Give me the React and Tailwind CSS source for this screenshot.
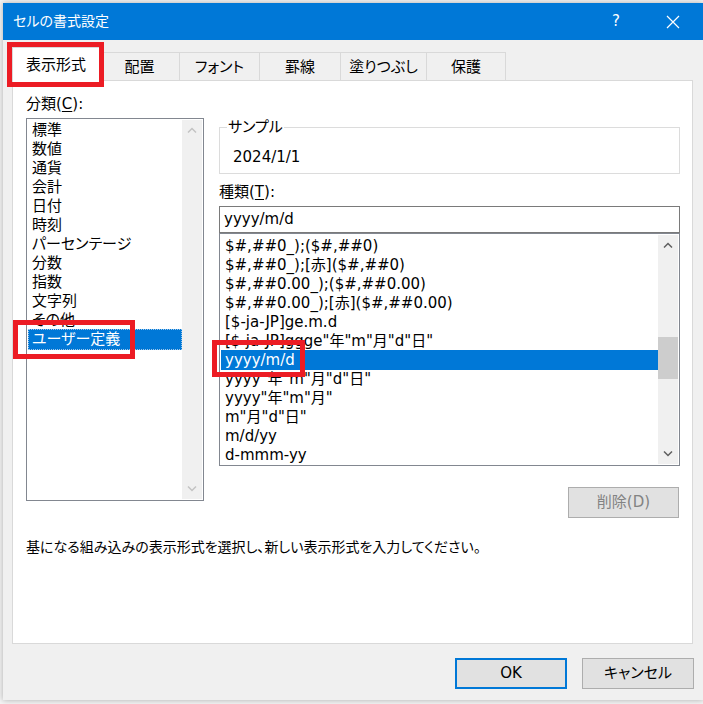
import { useState } from "react";

const CATEGORIES = [
  "標準",
  "数値",
  "通貨",
  "会計",
  "日付",
  "時刻",
  "パーセンテージ",
  "分数",
  "指数",
  "文字列",
  "その他",
  "ユーザー定義",
];

const FORMATS = [
  "$#,##0_);($#,##0)",
  "$#,##0_);[赤]($#,##0)",
  "$#,##0.00_);($#,##0.00)",
  "$#,##0.00_);[赤]($#,##0.00)",
  "[$-ja-JP]ge.m.d",
  '[$-ja-JP]ggge"年"m"月"d"日"',
  "yyyy/m/d",
  'yyyy"年"m"月"d"日"',
  'yyyy"年"m"月"',
  'm"月"d"日"',
  "m/d/yy",
  "d-mmm-yy",
];

const TABS = [
  { label: "表示形式", w: "w-[88px]" },
  { label: "配置", w: "w-[80px]" },
  { label: "フォント", w: "w-[80px]" },
  { label: "罫線", w: "w-[81px]" },
  { label: "塗りつぶし", w: "w-[86px]" },
  { label: "保護", w: "w-[79px]" },
];

function Chevron({ up, className }) {
  return (
    <svg width="10" height="6" viewBox="0 0 10 6" className={className}>
      <polyline
        points={up ? "1,5.5 5,1.5 9,5.5" : "1,0.5 5,4.5 9,0.5"}
        fill="none"
        stroke="currentColor"
        strokeWidth="1.5"
      />
    </svg>
  );
}

function Scrollbar({ disabled, thumb }) {
  const arrow = disabled ? "text-[#c3c3c3]" : "text-[#606060]";
  return (
    <div className="flex w-[20px] shrink-0 flex-col bg-[#f0f0f0]">
      <div className={`flex h-[20px] items-center justify-center ${arrow}`}>
        <Chevron up />
      </div>
      <div className="flex-1">
        {thumb && <div className="mt-[82px] h-[42px] bg-[#cdcdcd]" />}
      </div>
      <div className={`flex h-[20px] items-center justify-center ${arrow}`}>
        <Chevron />
      </div>
    </div>
  );
}

function RedBox({ className }) {
  return (
    <div
      className={`pointer-events-none absolute z-20 border-[5px] border-[#ec1c24] ${className}`}
    />
  );
}

export default function App() {
  const [category] = useState(11);
  const [format] = useState(6);

  return (
    <div className="h-[704px] w-[703px] overflow-hidden bg-[#f4f4f4] pl-[3px] pt-[3px] font-['DejaVu_Sans','Noto_Sans_CJK_JP',sans-serif] text-black [font-feature-settings:'palt']">
      <div className="relative flex h-[697px] w-[700px] flex-col bg-[#f0f0f0] shadow-[0_0_6px_rgba(0,0,0,0.3)]">
        {/* title bar */}
        <div className="flex h-[37px] shrink-0 items-center bg-[#0078d7] text-white">
          <span className="pl-[10px] text-[14px] leading-[19px]">セルの書式設定</span>
          <div className="ml-auto mr-[7px] flex items-center">
            <span className="w-[46px] text-center text-[15px] leading-[19px]">?</span>
            <div className="ml-[11px] flex w-[46px] items-center justify-center">
              <svg width="14" height="14" viewBox="0 0 14 14">
                <path d="M1 1L13 13M13 1L1 13" stroke="white" strokeWidth="1.2" />
              </svg>
            </div>
          </div>
        </div>

        {/* tabs */}
        <div className="ml-[9px] mt-[7px] flex h-[33px] items-end">
          {TABS.map((tab, i) =>
            i === 0 ? (
              <div
                key={tab.label}
                className={`relative z-10 -mb-px flex h-[34px] ${tab.w} items-center justify-center border-x border-t border-[#d9d9d9] bg-white pt-[2px] text-[15px]`}
              >
                {tab.label}
              </div>
            ) : (
              <div
                key={tab.label}
                className={`flex h-[28px] ${tab.w} items-center justify-center border-r border-t border-[#d9d9d9] bg-[#f0f0f0] pt-[2px] text-[15px]`}
              >
                {tab.label}
              </div>
            )
          )}
        </div>

        {/* panel */}
        <div className="ml-[9px] flex h-[564px] w-[681px] flex-col border border-[#d9d9d9] bg-white pl-[13px] pt-[14px]">
          <div className="flex gap-[15px]">
            {/* category column */}
            <div className="flex w-[178px] flex-col">
              <div className="text-[15px] leading-[19px]">
                分類(<span className="underline underline-offset-2">C</span>):
              </div>
              <div className="mt-[4px] flex h-[383px] border border-[#828790] p-px">
                <div className="flex-1 pt-px text-[15px] leading-[19px]">
                  {CATEGORIES.map((c, i) => (
                    <div
                      key={c}
                      className={
                        i === category
                          ? "-mt-px border border-dotted border-[#9fc7ea] bg-[#0078d7] pl-[3px] text-white"
                          : "pl-[4px]"
                      }
                    >
                      {c}
                    </div>
                  ))}
                </div>
                <Scrollbar disabled />
              </div>
            </div>

            {/* type column */}
            <div className="flex w-[461px] flex-col">
              <div className="relative mt-[32px] h-[47px] border border-[#dcdcdc] pl-[13px] pt-[20px]">
                <span className="absolute left-[7px] top-[-10px] bg-white px-px text-[15px] leading-[19px]">
                  サンプル
                </span>
                <div className="text-[15px] leading-[19px]">2024/1/1</div>
              </div>
              <div className="mt-[9px] text-[15px] leading-[19px]">
                種類(<span className="underline underline-offset-2">T</span>):
              </div>
              <div className="mt-[4px] flex h-[27px] items-center border border-[#7a7a7a] pl-[4px] text-[15px] leading-[19px]">
                yyyy/m/d
              </div>
              <div className="flex h-[233px] border border-[#828790] p-px">
                <div className="flex-1 overflow-hidden pt-[2px] text-[15px] leading-[19px]">
                  {FORMATS.map((f, i) => (
                    <div
                      key={f}
                      className={
                        i === format
                          ? "-mt-px h-[20px] whitespace-pre bg-[#0078d7] pl-[4px] pt-px text-white"
                          : "whitespace-pre pl-[4px]"
                      }
                    >
                      {f}
                    </div>
                  ))}
                </div>
                <Scrollbar thumb />
              </div>
              <div className="mt-[21px] flex justify-end pr-px">
                <button
                  type="button"
                  className="h-[31px] w-[111px] border border-[#adadad] bg-[#e1e1e1] text-[15px] text-[#838383]"
                >
                  削除(D)
                </button>
              </div>
            </div>
          </div>

          <p className="mt-[20px] text-[14px] leading-[19px]">
            基になる組み込みの表示形式を選択し、新しい表示形式を入力してください。
          </p>
        </div>

        {/* footer */}
        <div className="mt-[14px] flex justify-end gap-[15px] pr-[9px]">
          <button
            type="button"
            className="h-[31px] w-[112px] border-2 border-[#0078d7] bg-[#e1e1e1] text-[15px]"
          >
            OK
          </button>
          <button
            type="button"
            className="h-[31px] w-[112px] border border-[#adadad] bg-[#e1e1e1] text-[15px]"
          >
            キャンセル
          </button>
        </div>

        <RedBox className="left-[4px] top-[39px] h-[45px] w-[97px]" />
        <RedBox className="left-[10px] top-[317px] h-[39px] w-[122px]" />
        <RedBox className="left-[209px] top-[337px] h-[37px] w-[93px]" />
      </div>
    </div>
  );
}
